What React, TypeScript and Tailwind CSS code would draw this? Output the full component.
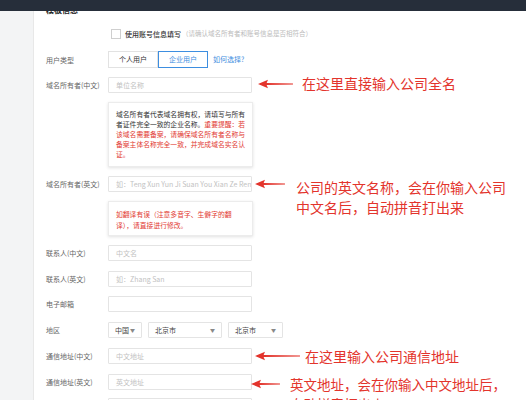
import React from "react";

const F = { fontFamily: '"Noto Sans CJK SC", "Noto Sans", sans-serif' };

function Arrow({ w }: { w: number }) {
  return (
    <svg width={w} height={10} viewBox={`0 0 ${w} 10`}>
      <path d={`M0 5 L10 0.8 L8.6 4 L${w} 4.5 L${w} 5.5 L8.6 6 L10 9.2 Z`} fill="#e3342c" />
    </svg>
  );
}

function Label({ children }: { children: React.ReactNode }) {
  return <div className="w-[62px] shrink-0 text-[7px] text-[#666] leading-[16px]">{children}</div>;
}

function Input({ ph }: { ph?: string }) {
  return (
    <div className="w-[144px] h-[16px] border border-[#e4e4e4] rounded-[1px] bg-white px-[7px] flex items-center overflow-hidden whitespace-nowrap text-[7px] text-[#c2c2c2]">
      {ph}
    </div>
  );
}

function Select({ w, text }: { w: string; text: string }) {
  return (
    <div className={`${w} h-[16px] border border-[#e4e4e4] rounded-[1px] flex items-center justify-between px-[6px] text-[7px] text-[#444]`}>
      <span>{text}</span>
      <span className="text-[5px] text-[#888]">▼</span>
    </div>
  );
}

export default function App() {
  return (
    <div className="w-[526px] h-[400px] overflow-hidden relative bg-white flex flex-col" style={F}>
      <div className="h-[11px] bg-[#262e3a] relative z-10 shrink-0" />
      <div className="flex flex-1 min-h-0">
        <div className="w-[34px] shrink-0 bg-[#f3f4f5] border-r border-[#e8e8e8]" />
        <div className="flex-1 pl-[12px] flex flex-col [&>*]:shrink-0">
          <div className="-mt-[7px] h-[12px] leading-[12px] text-[8px] font-bold text-[#222]">模板信息</div>
          <div className="mt-[13px] h-[10px] flex items-center pl-[65px]">
            <div className="w-[10px] h-[10px] border border-[#cfcfcf] bg-white" />
            <span className="ml-[4px] text-[7px] text-[#333] font-medium">使用账号信息填写</span>
            <span className="ml-[1px] text-[6.5px] text-[#bbb]">（请确认域名所有者和账号信息是否相符合）</span>
          </div>
          <div className="mt-[12px] flex items-center h-[17px]">
            <Label>用户类型</Label>
            <div className="w-[50px] h-[17px] border border-[#e2e2e2] flex items-center justify-center text-[7px] text-[#333]">个人用户</div>
            <div className="w-[50px] h-[17px] border border-[#3d8ee0] flex items-center justify-center text-[7px] text-[#3d8ee0]">企业用户</div>
            <span className="ml-[5px] text-[7px] text-[#3d8ee0]">如何选择?</span>
          </div>
          <div className="mt-[9px] flex items-center">
            <Label>域名所有者(中文)</Label>
            <Input ph="单位名称" />
          </div>
          <div className="mt-[9px] ml-[62px] w-[145px] h-[65px] border border-[#ececec] shadow-[0_1px_3px_rgba(0,0,0,0.12)] px-[7px] pt-[6px] text-[6.8px] leading-[10px] whitespace-nowrap">
            <div className="text-[#333]">域名所有者代表域名拥有权，请填写与所有</div>
            <div><span className="text-[#333]">者证件完全一致的企业名称。</span><span className="text-[#e23a32]">重要提醒：若</span></div>
            <div className="text-[#e23a32]">该域名需要备案，请确保域名所有者名称与</div>
            <div className="text-[#e23a32]">备案主体名称完全一致，并完成域名实名认</div>
            <div className="text-[#e23a32]">证。</div>
          </div>
          <div className="mt-[9px] flex items-center">
            <Label>域名所有者(英文)</Label>
            <Input ph="如：Teng Xun Yun Ji Suan You Xian Ze Ren" />
          </div>
          <div className="mt-[9px] ml-[62px] w-[145px] h-[35px] border border-[#ececec] shadow-[0_1px_3px_rgba(0,0,0,0.12)] px-[7px] pt-[7px] text-[6.8px] leading-[11px] whitespace-nowrap text-[#e23a32]">
            <div>如翻译有误（注意多音字、生僻字的翻</div>
            <div>译），请直接进行修改。</div>
          </div>
          <div className="mt-[9px] flex items-center">
            <Label>联系人(中文)</Label>
            <Input ph="中文名" />
          </div>
          <div className="mt-[10px] flex items-center">
            <Label>联系人(英文)</Label>
            <Input ph="如：Zhang San" />
          </div>
          <div className="mt-[9px] flex items-center">
            <Label>电子邮箱</Label>
            <Input />
          </div>
          <div className="mt-[10px] flex items-center gap-[6px]">
            <div className="-mr-[6px]"><Label>地区</Label></div>
            <Select w="w-[34px]" text="中国" />
            <Select w="w-[74px]" text="北京市" />
            <Select w="w-[55px]" text="北京市" />
          </div>
          <div className="mt-[10px] flex items-center">
            <Label>通信地址(中文)</Label>
            <Input ph="中文地址" />
          </div>
          <div className="mt-[10px] flex items-center">
            <Label>通信地址(英文)</Label>
            <Input ph="英文地址" />
          </div>
          <div className="mt-[8px] flex items-center">
            <Label>{""}</Label>
            <Input />
          </div>
        </div>
      </div>

      <div className="absolute left-[258px] top-[79px]"><Arrow w={35} /></div>
      <div className="absolute left-[302px] top-[73px] text-[14px] leading-[20px] text-[#e3342c] whitespace-nowrap">在这里直接输入公司全名</div>

      <div className="absolute left-[255px] top-[179px]"><Arrow w={30} /></div>
      <div className="absolute left-[296px] top-[177px] text-[14px] leading-[20px] text-[#e3342c] whitespace-nowrap">
        <div>公司的英文名称，会在你输入公司</div>
        <div>中文名后，自动拼音打出来</div>
      </div>

      <div className="absolute left-[255px] top-[351px]"><Arrow w={45} /></div>
      <div className="absolute left-[305px] top-[346px] text-[14px] leading-[20px] text-[#e3342c] whitespace-nowrap">在这里输入公司通信地址</div>

      <div className="absolute left-[251px] top-[379px]"><Arrow w={29} /></div>
      <div className="absolute left-[290px] top-[374px] text-[13.5px] leading-[20px] text-[#e3342c] whitespace-nowrap">
        <div>英文地址，会在你输入中文地址后，</div>
        <div>自动拼音打出来</div>
      </div>
    </div>
  );
}
